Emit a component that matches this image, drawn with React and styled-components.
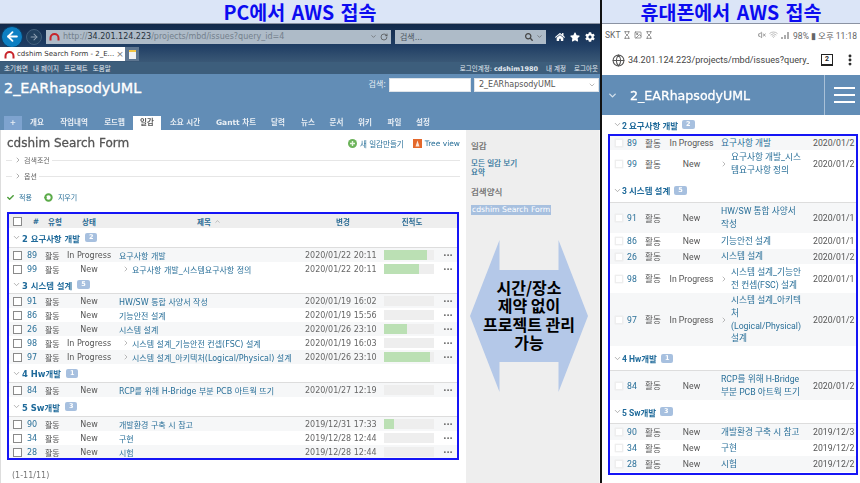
import React from 'react';
import styled, { createGlobalStyle } from 'styled-components';
import { FaHome, FaStar, FaCog, FaSearch, FaCheck } from 'react-icons/fa';
import { ChevronRight, ChevronDown, ChevronUp, ArrowLeft, ArrowRight, RotateCw, Globe, Wifi, Image, Hourglass, VolumeX, EllipsisVertical } from 'lucide-react';

const Global = createGlobalStyle`
  html, body { margin: 0; padding: 0; background: #fff; }
  body { width: 860px; height: 483px; overflow: hidden; }
  * { box-sizing: border-box; }
`;

const desktopFont = `"DejaVu Sans", "Noto Sans CJK KR", sans-serif`;
const mobileFont = `Roboto, "Noto Sans CJK KR", sans-serif`;

const Page = styled.div`
  width: 860px; height: 483px; display: flex; overflow: hidden;
`;
const Column = styled.div`
  width: ${p => p.$w}px; height: 483px; display: flex; flex-direction: column; flex: none; overflow: hidden;
  position: relative;
  ${p => p.$divider && 'border-left: 2px solid #111;'}
`;
const Caption = styled.div`
  height: 24px; flex: none; background: #dbe5f7; border-bottom: 1px solid #8b93a3;
  display: flex; align-items: center; justify-content: center;
  font: 700 ${p => p.$size}px "Noto Sans CJK KR", sans-serif; color: #0b0bf0; white-space: pre; word-spacing: 2px;
`;
const Shot = styled.div`
  flex: 1; display: flex; flex-direction: column; min-height: 0; filter: blur(0.35px);
`;

const Chrome = styled.div`
  height: 38px; flex: none; background: linear-gradient(#12294a, #1f3d63 55%, #3a5876);
  display: flex; flex-direction: column;
`;
const AddressRow = styled.div`
  height: 23px; display: flex; align-items: center; padding: 2px 0 0 1px;
`;
const BackBtn = styled.div`
  width: 22px; height: 22px; border-radius: 50%; background: #0d7fc2; border: 1px solid #0a3d66;
  display: flex; align-items: center; justify-content: center; color: #fff; flex: none;
`;
const ForwardBtn = styled.div`
  width: 16px; height: 16px; margin-left: 3px; border-radius: 50%; background: #22415f; border: 1px solid #43607c;
  display: flex; align-items: center; justify-content: center; color: #8fa2b4; flex: none;
`;
const AddressBar = styled.div`
  width: 345px; height: 14px; margin-left: 4px; background: #aebbc8; display: flex; align-items: center; gap: 3px;
  padding: 0 3px; font: 8px ${desktopFont}; color: #73808c; flex: none;
`;
const Host = styled.span` color: #27323c; `;
const Spacer = styled.span` flex: 1; `;
const SearchBar = styled(AddressBar)`
  width: 151px; color: #4b5560; padding-left: 5px;
`;
const RightIcons = styled.div`
  display: flex; gap: 5px; margin-left: 9px; color: #fff; align-items: center;
`;
const TabRow = styled.div` height: 14px; display: flex; align-items: stretch; `;
const BrowserTab = styled.div`
  width: 125px; background: #fff; display: flex; align-items: center; gap: 2px; padding: 0 3px 0 4px;
  font: 7px ${desktopFont}; color: #333; white-space: nowrap;
`;
const ArcIcon = styled.svg` flex: none; display: block; `;
const TabClose = styled.span` margin-left: auto; color: #777; font-size: 9px; `;
const NewTab = styled.div`
  width: 14px; background: #5e7690; display: flex; align-items: center; justify-content: center;
`;
const NewTabIcon = styled.div` width: 7px; height: 9px; background: #f1f1f1; border-top: 2px solid #f4c542; `;

const TopMenu = styled.div`
  height: 12px; flex: none; background: #3d5e7c; display: flex; align-items: center; padding: 0 2px 0 4px;
  font: 6.5px ${desktopFont}; color: #e4ebf1; gap: 5px;
`;
const MenuRight = styled.div` margin-left: auto; display: flex; gap: 8px; `;
const Strong = styled.b` font-weight: 700; `;

const Banner = styled.div`
  height: 56px; flex: none; background: #628db6; display: flex; flex-direction: column;
`;
const BannerTop = styled.div`
  flex: 1; display: flex; align-items: flex-start; padding: 4px 1px 0 4px;
`;
const ProjectTitle = styled.div`
  font: 400 14.4px ${desktopFont}; -webkit-text-stroke: 0.35px #fff; color: #fff; line-height: 20px; white-space: nowrap;
`;
const SearchLabel = styled.div`
  margin-left: auto; font: 8px ${desktopFont}; color: #e6edf4; line-height: 14px; margin-right: 3px;
`;
const Input = styled.div`
  width: 82px; height: 14px; background: #fff; border: 1px solid #dfe4e9;
`;
const ProjectSelect = styled.div`
  width: 125px; height: 14px; margin-left: 3px; background: #fff; border: 1px solid #dfe4e9;
  font: 8px/12px ${desktopFont}; color: #555; padding-left: 4px; display: flex; align-items: center; justify-content: space-between;
  padding-right: 2px;
`;
const Tabs = styled.div`
  height: 14px; display: flex; padding-left: 4px;
`;
const PageTab = styled.div`
  width: ${p => p.$w}px; flex: none; text-align: center; font: 700 7.5px/14px ${desktopFont};
  color: ${p => (p.$active ? '#555' : '#e8eef4')};
  background: ${p => (p.$active ? '#fff' : p.$plus ? '#7ea3cf' : 'transparent')};
`;

const Content = styled.div` flex: 1; display: flex; min-height: 0; `;
const Main = styled.div`
  width: 466px; flex: none; padding: 0 6px; border-left: 1px solid #ddd; display: flex; flex-direction: column; margin-left: 0;
`;
const TitleRow = styled.div`
  height: 22px; padding-top: 4px; flex: none; display: flex; align-items: center; width: 454px; margin-left: -1px;
`;
const PageHeading = styled.div`
  font: 400 12px ${desktopFont}; -webkit-text-stroke: 0.3px #555; color: #555; white-space: nowrap; padding-left: 1px;
`;
const HeadActions = styled.div`
  margin-left: auto; display: flex; align-items: center; gap: 3px; font: 7.5px ${desktopFont}; color: #2a7099; white-space: nowrap;
`;
const ActionGap = styled.span` width: 3px; `;
const Fold = styled.div`
  height: 16px; flex: none; display: flex; align-items: center; font: 7px ${desktopFont}; color: #666; gap: 2px; width: 454px;
  margin-left: -1px;
`;
const FoldLine = styled.span`
  flex: ${p => (p.$fixed ? '0 0 6px' : 1)}; height: 1px; background: #e6e6e6;
`;
const ApplyRow = styled.div`
  height: 28px; padding-bottom: 2px; flex: none; display: flex; align-items: center; gap: 5px;
  font: 7px ${desktopFont}; color: #2a7099;
`;
const ApplyGap = styled.span` width: 2px; `;

const Frame = styled.div`
  width: 452px; height: 248px; flex: none; border: 2px solid #1515f5; overflow: hidden; display: flex; flex-direction: column;
`;
const deskCols = '18px 18px 20px 48px 192px 76px 56px 20px';
const HeadRow = styled.div`
  height: 14px; flex: none; background: #eee; display: grid; grid-template-columns: ${deskCols}; align-items: center;
  font: 700 7.5px ${desktopFont}; color: #2a6b94;
`;
const HeadCell = styled.div`
  text-align: center;
  padding-left: ${p => p.$indent || 0}px;
  ${p => p.$sort && 'display: flex; justify-content: center; align-items: center; gap: 3px;'}
`;
const Box = styled.span`
  display: block; width: 9px; height: 9px; margin-left: 4px; background: #fff; border: 1px solid #8a8a8a;
`;
const Group = styled.div`
  height: ${p => p.$h}px; flex: none; border-bottom: 1px solid #ddd; display: flex; align-items: center; padding-left: 3px; gap: 1px;
  font: 700 8.4px ${desktopFont}; color: #1f6a9a;
`;
const Badge = styled.span`
  background: #a7c0df; color: #fff; font: 700 6.5px/9px ${desktopFont}; padding: 0 4px; border-radius: 2px; margin-left: 4px;
`;
const Row = styled.div`
  height: 14px; flex: none; display: grid; grid-template-columns: ${deskCols}; align-items: center;
  background: ${p => (p.$odd ? '#f6f7f8' : '#fff')}; font: 8px ${desktopFont}; color: #555; white-space: nowrap;
`;
const IdCell = styled.div` color: #2a7099; font-size: 8px; `;
const StatusCell = styled.div` text-align: center; `;
const TitleCell = styled.div`
  display: flex; align-items: center; color: #2a7099; padding-left: ${p => (p.$sub ? 9 : 6)}px; gap: 2px; overflow: visible;
`;
const DateCell = styled.div` color: #666; font-size: 8px; `;
const Track = styled.div`
  width: 50px; height: 10px; margin-left: 3px; background: #eee; display: flex;
`;
const Fill = styled.div` background: #bbe0b4; height: 100%; `;
const Dots = styled.div`
  text-align: center; font: 700 5px/8px ${desktopFont}; color: #666; letter-spacing: 0; padding-left: 2px;
`;
const Pager = styled.div`
  margin-top: 11px; margin-left: 5px; font: 8px ${desktopFont}; color: #777;
`;

const Sidebar = styled.div`
  flex: 1; background: #eee; padding: 10px 0 0 5px; position: relative; border-right: 1px solid #f6f6f6;
`;
const SideHead = styled.div` font: 8.5px/12px ${desktopFont}; -webkit-text-stroke: 0.2px #666; color: #666; `;
const SideLink = styled.div` font: 7.5px/9px ${desktopFont}; -webkit-text-stroke: 0.2px #2a7099; color: #2a7099; `;
const SideList = styled.div` margin: 7px 0 9px; `;
const Query = styled.div`
  display: inline-block; margin-top: 6px; background: #a7c0df; color: #fff; font: 7.7px/10px ${desktopFont};
  padding: 0 1px; white-space: nowrap;
`;
const ArrowWrap = styled.div`
  position: absolute; left: 4px; top: 110px; width: 118px; height: 152px;
`;
const ArrowShape = styled.svg` display: block; width: 118px; height: 152px; `;
const ArrowText = styled.div`
  position: absolute; left: 0; right: 0; top: 38px; text-align: center;
  font: 700 16px/18.4px "Noto Sans CJK KR", sans-serif; color: #000; white-space: nowrap;
`;

/* mobile */
const StatusBar = styled.div`
  height: 21px; flex: none; background: #fff; display: flex; align-items: center; padding: 0 3px;
  font: 8.5px ${mobileFont}; color: #666; gap: 3px; white-space: nowrap;
`;
const UrlBar = styled.div`
  height: 30px; flex: none; background: #fff; display: flex; align-items: center; padding: 0 0 0 10px; gap: 4px;
  font: 9.1px ${mobileFont}; color: #444; white-space: nowrap;
`;
const TabCount = styled.div`
  margin-left: 8px; width: 12px; height: 12px; flex: none; border: 1.5px solid #222; border-bottom-width: 2.5px;
  font: 700 7px/9px ${mobileFont}; text-align: center; color: #222;
`;
const UrlText = styled.div` width: 181px; overflow: hidden; flex: none; margin-left: -1px; `;
const MobileHeader = styled.div`
  height: 40px; flex: none; background: #628db6; display: flex; align-items: center; color: #fff;
`;
const MobChevron = styled.div` width: 28px; padding-left: 5px; color: #d4e0ec; flex: none; display: flex; `;
const MobTitle = styled.div` font: 400 12.6px ${desktopFont}; -webkit-text-stroke: 0.3px #fff; flex: 1; white-space: nowrap; `;
const Burger = styled.div`
  width: 36px; height: 100%; border-left: 1px solid #a9c1d8; flex: none; display: flex; flex-direction: column;
  justify-content: center; gap: 5px; padding: 0 5px 0 9px;
`;
const BurgerBar = styled.span` height: 2px; background: #fff; display: block; `;
const MobGroupOuter = styled.div`
  height: 19px; flex: none; display: flex; align-items: center; padding-left: 11px; gap: 0;
  font: 700 8.5px ${mobileFont}; color: #1f6a9a;
`;
const MobFrame = styled.div`
  width: 250px; height: 341px; flex: none; margin-left: 6px; border: 2px solid #1515f5; overflow: hidden;
  display: flex; flex-direction: column;
`;
const MobGroup = styled.div`
  height: ${p => p.$h}px; flex: none; display: flex; align-items: center; padding-left: 3px; gap: 0;
  border-bottom: 1px solid #ddd; font: 700 8.5px ${mobileFont}; color: #1f6a9a;
`;
const MobRow = styled.div`
  height: ${p => p.$h}px; flex: none; display: grid; grid-template-columns: 17px 18px 22px 49px 93px 50px; align-items: center;
  background: ${p => (p.$odd ? '#f6f7f8' : '#fff')}; font: 8.7px ${mobileFont}; color: #555; white-space: nowrap;
`;
const MobBox = styled.span`
  display: block; width: 8px; height: 8px; margin-left: 5px; background: #fff; border: 1px solid #eee; box-shadow: 0 0 1px #ddd;
`;
const MobTitleCell = styled.div`
  padding-left: ${p => (p.$sub ? 4 : 5)}px; display: flex; align-items: center; gap: 3px; color: #2a7099;
  white-space: pre-line; line-height: 12.7px;
`;
const MobDate = styled.div` padding-left: 4px; color: #555; `;
const MobId = styled.div` color: #2a7099; `;

const RedArc = () => (
  <ArcIcon width="11" height="9" viewBox="0 0 11 9"><path d="M1.5 8.5V6a4 4 0 0 1 8 0v2.5" fill="none" stroke="#c8242b" strokeWidth="2" /></ArcIcon>
);
const Plus = () => (
  <svg width="9" height="9" viewBox="0 0 9 9"><circle cx="4.5" cy="4.5" r="4.5" fill="#6cb35a" /><path d="M4.5 2v5M2 4.5h5" stroke="#e8f5e2" strokeWidth="1.4" /></svg>
);
const TreeIcon = () => (
  <svg width="9" height="9" viewBox="0 0 9 9"><rect width="9" height="9" fill="#e4682b" /><path d="M4.5 1.5L6.5 7.5H2.5z" fill="#fbe6d8" /></svg>
);
const Refresh = () => (
  <svg width="9" height="9" viewBox="0 0 9 9"><circle cx="4.5" cy="4.5" r="3.2" fill="none" stroke="#5cab4a" strokeWidth="2" /><path d="M0 4h3L1.5 6.5z" fill="#5cab4a" /></svg>
);
const Signal = () => (
  <svg width="9" height="8" viewBox="0 0 9 8"><path d="M1 8V6M4 8V4M7 8V1" stroke="#777" strokeWidth="1.2" /></svg>
);

const groups = [
  { name: '2 요구사항 개발', n: 2, h: 20, m: 0, rows: [
    [89, 'In Progress', '요구사항 개발', '2020/01/22 20:11', 85, 0, 14, '요구사항 개발', '2020/01/2'],
    [99, 'New', '요구사항 개발_시스템요구사항 정의', '2020/01/22 20:11', 70, 1, 28, '요구사항 개발_시스\n템요구사항 정의', '2020/01/2'],
  ] },
  { name: '3 시스템 설계', n: 5, h: 18, m: 25, rows: [
    [91, 'New', 'HW/SW 통합 사양서 작성', '2020/01/19 16:02', 0, 0, 30, 'HW/SW 통합 사양서\n작성', '2020/01/1'],
    [86, 'New', '기능안전 설계', '2020/01/19 15:56', 0, 0, 16, '기능안전 설계', '2020/01/1'],
    [26, 'New', '시스템 설계', '2020/01/26 23:10', 45, 0, 15, '시스템 설계', '2020/01/2'],
    [98, 'In Progress', '시스템 설계_기능안전 컨셉(FSC) 설계', '2020/01/19 16:03', 0, 1, 29, '시스템 설계_기능안\n전 컨셉(FSC) 설계', '2020/01/1'],
    [97, 'In Progress', '시스템 설계_아키텍처(Logical/Physical) 설계', '2020/01/26 23:10', 91, 1, 53, '시스템 설계_아키텍\n처\n(Logical/Physical)\n설계', '2020/01/2'],
  ] },
  { name: '4 Hw개발', n: 1, h: 19, m: 25, rows: [
    [84, 'New', 'RCP를 위해 H-Bridge 부분 PCB 아트웍 뜨기', '2020/01/27 12:19', 0, 0, 29, 'RCP를 위해 H-Bridge\n부분 PCB 아트웍 뜨기', '2020/01/2'],
  ] },
  { name: '5 Sw개발', n: 3, h: 20, m: 24, rows: [
    [90, 'New', '개발환경 구축 시 참고', '2019/12/31 17:33', 20, 0, 16, '개발환경 구축 시 참고', '2019/12/3'],
    [34, 'New', '구현', '2019/12/28 12:44', 0, 0, 16, '구현', '2019/12/2'],
    [28, 'New', '시험', '2019/12/28 12:44', 0, 0, 16, '시험', '2019/12/2'],
  ] },
];

const shaded = [89, 91, 26, 97, 84, 90, 28];

const tabs = [
  ['개요', 30], ['작업내역', 44], ['로드맵', 37], ['일감', 28, true], ['소요 시간', 48], ['Gantt 차트', 54],
  ['달력', 30], ['뉴스', 30], ['문서', 27], ['위키', 30], ['파일', 29], ['설정', 28],
];

const FoldRow = ({ label }) => (
  <Fold>
    <FoldLine $fixed />
    <ChevronRight size={8} color="#888" />
    {label}
    <FoldLine />
  </Fold>
);

function Desktop() {
  return (
    <Shot>
      <Chrome>
        <AddressRow>
          <BackBtn><ArrowLeft size={15} strokeWidth={3} /></BackBtn>
          <ForwardBtn><ArrowRight size={10} strokeWidth={2.5} /></ForwardBtn>
          <AddressBar>
            <RedArc />
            <span>http://<Host>34.201.124.223</Host>/projects/mbd/issues?query_id=4</span>
            <Spacer />
            <ChevronDown size={7} color="#555" />
            <RotateCw size={8} color="#444" />
          </AddressBar>
          <SearchBar>
            검색...
            <Spacer />
            <FaSearch size={8} color="#444" />
            <ChevronDown size={7} color="#555" />
          </SearchBar>
          <RightIcons>
            <FaHome size={10} />
            <FaStar size={10} />
            <FaCog size={10} />
          </RightIcons>
        </AddressRow>
        <TabRow>
          <BrowserTab>
            <RedArc />
            cdshim Search Form - 2_E...
            <TabClose>×</TabClose>
          </BrowserTab>
          <NewTab><NewTabIcon /></NewTab>
        </TabRow>
      </Chrome>
      <TopMenu>
        <span>초기화면</span><span>내 페이지</span><span>프로젝트</span><span>도움말</span>
        <MenuRight>
          <span>로그인계정: <Strong>cdshim1980</Strong></span><span>내 계정</span><span>로그아웃</span>
        </MenuRight>
      </TopMenu>
      <Banner>
        <BannerTop>
          <ProjectTitle>2_EARhapsodyUML</ProjectTitle>
          <SearchLabel>검색:</SearchLabel>
          <Input />
          <ProjectSelect>2_EARhapsodyUML<ChevronDown size={8} color="#999" /></ProjectSelect>
        </BannerTop>
        <Tabs>
          <PageTab $w={18} $plus>+</PageTab>
          {tabs.map(([t, w, a]) => <PageTab key={t} $w={w} $active={a}>{t}</PageTab>)}
        </Tabs>
      </Banner>
      <Content>
        <Main>
          <TitleRow>
            <PageHeading>cdshim Search Form</PageHeading>
            <HeadActions>
              <Plus />새 일감만들기<ActionGap /><TreeIcon />Tree view
            </HeadActions>
          </TitleRow>
          <FoldRow label="검색조건" />
          <FoldRow label="옵션" />
          <ApplyRow>
            <FaCheck size={7} color="#4e9e3c" />적용<ApplyGap /><Refresh />지우기
          </ApplyRow>
          <Frame>
            <HeadRow>
              <Box />
              <HeadCell>#</HeadCell>
              <HeadCell>유형</HeadCell>
              <HeadCell>상태</HeadCell>
              <HeadCell $sort>제목 <ChevronUp size={7} color="#999" /></HeadCell>
              <HeadCell>변경</HeadCell>
              <HeadCell $indent={6}>진척도</HeadCell>
              <span />
            </HeadRow>
            {groups.map(g => (
              <React.Fragment key={g.name}>
                <Group $h={g.h}>
                  <ChevronDown size={9} color="#999" />{g.name}<Badge>{g.n}</Badge>
                </Group>
                {g.rows.map(r => (
                  <Row key={r[0]} $odd={shaded.includes(r[0])}>
                    <Box />
                    <IdCell>{r[0]}</IdCell>
                    <div>활동</div>
                    <StatusCell>{r[1]}</StatusCell>
                    <TitleCell $sub={r[5]}>
                      {r[5] ? <ChevronRight size={8} color="#999" /> : null}
                      {r[2]}
                    </TitleCell>
                    <DateCell>{r[3]}</DateCell>
                    <Track><Fill style={{ width: `${r[4]}%` }} /></Track>
                    <Dots>•••</Dots>
                  </Row>
                ))}
              </React.Fragment>
            ))}
          </Frame>
          <Pager>(1-11/11)</Pager>
        </Main>
        <Sidebar>
          <SideHead>일감</SideHead>
          <SideList>
            <SideLink>모든 일감 보기</SideLink>
            <SideLink>요약</SideLink>
          </SideList>
          <SideHead>검색양식</SideHead>
          <Query>cdshim Search Form</Query>
          <ArrowWrap>
            <ArrowShape viewBox="0 0 118 152">
              <path d="M0 76 L29.5 0 V30 H88.5 V0 L118 76 L88.5 152 V122 H29.5 V152 Z" fill="#b4c8e8" />
            </ArrowShape>
            <ArrowText>시간/장소<br />제약 없이<br />프로젝트 관리<br />가능</ArrowText>
          </ArrowWrap>
        </Sidebar>
      </Content>
    </Shot>
  );
}

function Mobile() {
  return (
    <Shot>
      <StatusBar>
        SKT <Hourglass size={8} /> <Image size={8} /> <Hourglass size={8} />
        <Spacer />
        <VolumeX size={8} /><Wifi size={9} color="#aaa" /><Signal /> 98% ▮ 오후 11:18
      </StatusBar>
      <UrlBar>
        <Globe size={13} color="#555" />
        <UrlText>34.201.124.223/projects/mbd/issues?query_</UrlText>
        <TabCount>2</TabCount>
        <EllipsisVertical size={14} color="#222" strokeWidth={3} style={{ marginLeft: 6 }} />
      </UrlBar>
      <MobileHeader>
        <MobChevron><ChevronDown size={11} strokeWidth={3} /></MobChevron>
        <MobTitle>2_EARhapsodyUML</MobTitle>
        <Burger><BurgerBar /><BurgerBar /><BurgerBar /></Burger>
      </MobileHeader>
      <MobGroupOuter>
        <ChevronDown size={9} color="#999" />{groups[0].name}<Badge>2</Badge>
      </MobGroupOuter>
      <MobFrame>
        {groups.map((g, gi) => (
          <React.Fragment key={g.name}>
            {gi > 0 && (
              <MobGroup $h={g.m}>
                <ChevronDown size={9} color="#999" />{g.name}<Badge>{g.n}</Badge>
              </MobGroup>
            )}
            {g.rows.map(r => (
              <MobRow key={r[0]} $h={r[6]} $odd={shaded.includes(r[0])}>
                <MobBox />
                <MobId>{r[0]}</MobId>
                <div>활동</div>
                <StatusCell>{r[1]}</StatusCell>
                <MobTitleCell $sub={r[5]}>
                  {r[5] ? <ChevronRight size={8} color="#999" /> : null}
                  <span>{r[7]}</span>
                </MobTitleCell>
                <MobDate>{r[8]}</MobDate>
              </MobRow>
            ))}
          </React.Fragment>
        ))}
      </MobFrame>
    </Shot>
  );
}

export default function App() {
  return (
    <Page>
      <Global />
      <Column $w={600}>
        <Caption $size={19.5}>PC에서 AWS 접속</Caption>
        <Desktop />
      </Column>
      <Column $w={260} $divider>
        <Caption $size={19.5}>휴대폰에서 AWS 접속</Caption>
        <Mobile />
      </Column>
    </Page>
  );
}
